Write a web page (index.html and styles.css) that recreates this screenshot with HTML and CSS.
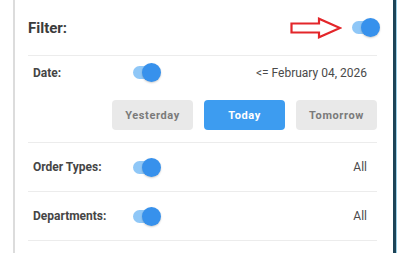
FILE: index.html
```html
<!DOCTYPE html>
<html lang="en">
<head>
    <meta charset="UTF-8">
    <meta name="viewport" content="width=device-width, initial-scale=1.0">
    <title>Filter</title>
    <link rel="stylesheet" href="styles.css">
</head>
<body>
    <div class="frame">
        <div class="panel">
            <div class="row head">
                <span class="title">Filter:</span>
                <span class="toggle"><span class="knob"></span></span>
                <!-- annotation arrow -->
                <svg class="arrow" width="52" height="22" viewBox="0 0 52 22">
                    <path d="M1.5 6.5 H29 V1.8 L50 11 L29 20.2 V15.5 H1.5 Z" fill="none" stroke="#e3262a" stroke-width="2.2" stroke-linejoin="miter"/>
                </svg>
            </div>

            <div class="row date-row">
                <div class="line">
                    <span class="label">Date:</span>
                    <span class="toggle"><span class="knob"></span></span>
                    <span class="value">&lt;= February 04, 2026</span>
                </div>
                <div class="buttons">
                    <button type="button" class="btn">Yesterday</button>
                    <button type="button" class="btn active">Today</button>
                    <button type="button" class="btn">Tomorrow</button>
                </div>
            </div>

            <div class="row">
                <div class="line">
                    <span class="label">Order Types:</span>
                    <span class="toggle"><span class="knob"></span></span>
                    <span class="value">All</span>
                </div>
            </div>

            <div class="row">
                <div class="line">
                    <span class="label">Departments:</span>
                    <span class="toggle"><span class="knob"></span></span>
                    <span class="value">All</span>
                </div>
            </div>
        </div>
    </div>
</body>
</html>
```

FILE: styles.css
```css
body { margin: 0; padding: 0; background: #ffffff; font-family: Roboto, "Noto Sans", Arial, sans-serif; }
.frame { margin-left: 13px; width: 378px; height: 253px; border-left: 2px solid #dcdcdc; border-right: 3px solid #1d4457; box-shadow: 1px 0 0 #9fd0e6; overflow: hidden; }
.panel { padding: 0 16px 0 13px; }
.row { border-bottom: 1px solid #ececec; }
.head { position: relative; display: flex; align-items: center; justify-content: space-between; height: 55px; }
.title { font-size: 15px; font-weight: 700; color: #3b3b3b; }
.head .toggle { margin-right: 1px; }
.arrow { position: absolute; left: 262px; top: 17px; }
.line { display: flex; align-items: center; height: 48px; padding: 0 10px 0 5px; }
.date-row .line { height: 33px; padding-top: 0; }
.label { width: 100px; font-size: 12px; font-weight: 700; color: #454545; }
.value { margin-left: auto; font-size: 12px; color: #4a4a4a; }
.toggle { position: relative; display: inline-block; width: 24px; height: 13px; border-radius: 7px; background: #8fc7f7; }
.knob { position: absolute; right: -4px; top: -3px; width: 19px; height: 19px; border-radius: 50%; background: #3791ec; box-shadow: 0 1px 2px rgba(0, 0, 0, 0.2); }
.buttons { display: flex; justify-content: flex-end; gap: 11px; padding: 11px 0 12px; }
.btn { width: 81px; height: 30px; border: none; border-radius: 4px; background: #e9e9e9; color: #7a7a7a; font-family: Roboto, Arial, sans-serif; font-size: 11px; font-weight: 700; letter-spacing: 0.6px; cursor: pointer; }
.btn.active { background: #3d9cf0; color: #ffffff; }
```
